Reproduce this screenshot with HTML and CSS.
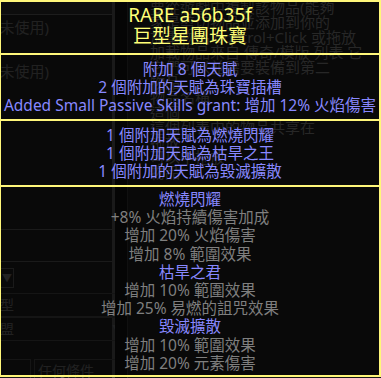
FILE: index.html
```html
<!DOCTYPE html>
<html lang="zh-Hant">
<head>
<meta charset="utf-8">
<title>巨型星團珠寶</title>
<link rel="stylesheet" href="styles.css">
</head>
<body>
<div class="page">
  <aside class="left">
    <div class="topbar"></div>
    <div class="slot">(未使用)</div>
    <div class="slot gap">(未使用)</div>
    <div class="filler"></div>
    <div class="rule"></div>
    <div class="row-sel"><span class="sel small">▼</span></div>
    <div class="rule"></div>
    <div class="row-sel"><span class="sel tiny">▼</span></div>
    <div class="field">型</div>
    <div class="field drop">盟<span class="arrow">▼</span></div>
    <div class="inputs"><span class="box short"></span><span class="box long">任何條件</span></div>
  </aside>
  <main class="right">
    <div class="divider"></div>
    <div class="help">
      <p>要從遊戲中複製該物品(能夠</p>
      <p>家是剪切物品並添加到你的</p>
      <p>加重物品 Control+Click 或拖放</p>
      <p>加載物品來自 傳奇/模版 列表 它</p>
      <p>它們可以並需要裝備到第二</p>
      <p>物品</p>
      <p>物品名稱</p>
      <p>這個</p>
      <p>這個列表中的物品共享在</p>
      <p>拖放</p>
      <p>可以中拖放</p>
      <p>物品</p>
    </div>
  </main>
</div>

<div class="tooltip">
  <section class="sec head">
    <div class="name">RARE a56b35f</div>
    <div class="name">巨型星團珠寶</div>
  </section>
  <section class="sec mods">
    <div class="magic">附加 8 個天賦</div>
    <div class="magic">2 個附加的天賦為珠寶插槽</div>
    <div class="magic">Added Small Passive Skills grant: 增加 12% 火焰傷害</div>
  </section>
  <section class="sec mods">
    <div class="magic">1 個附加天賦為燃燒閃耀</div>
    <div class="magic">1 個附加天賦為枯旱之王</div>
    <div class="magic">1 個附加的天賦為毀滅擴散</div>
  </section>
  <section class="sec notables">
    <div class="magic">燃燒閃耀</div>
    <div class="plain">+8% 火焰持續傷害加成</div>
    <div class="plain">增加 20% 火焰傷害</div>
    <div class="plain">增加 8% 範圍效果</div>
    <div class="magic">枯旱之君</div>
    <div class="plain">增加 10% 範圍效果</div>
    <div class="plain">增加 25% 易燃的詛咒效果</div>
    <div class="magic">毀滅擴散</div>
    <div class="plain">增加 10% 範圍效果</div>
    <div class="plain">增加 20% 元素傷害</div>
  </section>
</div>
</body>
</html>
```
FILE: styles.css
```css
html, body {
  margin: 0;
  padding: 0;
}
body {
  width: 381px;
  height: 378px;
  overflow: hidden;
  background: #161616;
  font-family: "Noto Sans", "Noto Sans CJK TC", sans-serif;
}

/* background application */
.page {
  display: grid;
  grid-template-columns: 115px 1fr;
  height: 378px;
}
.left {
  display: flex;
  flex-direction: column;
  background: #1a1a1a;
  color: #585858;
  font-size: 15px;
  border-right: 3px solid #444;
}
.topbar {
  height: 14px;
  border-bottom: 1px solid #4c4c4c;
  background: #222;
}
.slot {
  height: 24px;
  line-height: 24px;
  margin-left: -5px;
}
.slot.gap {
  margin-top: 20px;
}
.filler {
  height: 146px;
}
.rule {
  border-top: 1px solid #444;
}
.row-sel {
  height: 31px;
  display: flex;
  align-items: center;
  justify-content: flex-end;
}
.sel {
  border: 1px solid #444;
  font-size: 10px;
  color: #5a5a5a;
  display: flex;
  align-items: center;
  justify-content: center;
}
.sel.small {
  width: 16px;
  height: 18px;
  margin-right: -18px;
}
.sel.tiny {
  width: 12px;
  height: 18px;
  margin-right: auto;
}
.field {
  height: 22px;
  line-height: 22px;
  border: 1px solid #383838;
  border-left: 0;
  margin-right: -15px;
  font-size: 14px;
}
.field.drop {
  display: flex;
  justify-content: space-between;
}
.arrow {
  font-size: 10px;
  padding-right: 4px;
}
.inputs {
  display: flex;
  gap: 3px;
  margin-top: 18px;
  margin-right: -15px;
}
.box {
  height: 22px;
  line-height: 22px;
  border: 1px solid #383838;
  font-size: 14px;
}
.box.short {
  width: 30px;
  border-left: 0;
}
.box.long {
  flex: 1;
  padding-left: 3px;
}

.right {
  display: flex;
  background: #181818;
}
.divider {
  width: 12px;
  background: #0e0e0e;
  border-right: 1px solid #2c2c2c;
}
.help {
  padding-left: 22px;
  color: #666;
  font-size: 15px;
  line-height: 15px;
  white-space: nowrap;
}
.help p {
  margin: 0;
}

/* tooltip overlay */
.tooltip {
  position: absolute;
  left: -1px;
  top: 0;
  width: 382px;
  height: 377px;
  box-sizing: border-box;
  border: 2px solid #fff77a;
  background: rgba(0, 0, 0, 0.62);
  display: flex;
  flex-direction: column;
  text-align: center;
  white-space: nowrap;
}
.sec + .sec {
  border-top: 2px solid #fff77a;
}
.head {
  height: 51px;
  box-sizing: border-box;
  padding-top: 3px;
}
.name {
  color: #ffff77;
  font-size: 19px;
  line-height: 21px;
}
.mods {
  height: 66px;
  box-sizing: border-box;
  padding-top: 5px;
}
.notables {
  flex: 1;
  padding-top: 3px;
}
.magic, .plain {
  font-size: 15.5px;
  line-height: 18px;
}
.notables .magic, .notables .plain {
  line-height: 18.2px;
}
.magic {
  color: #8888ff;
}
.plain {
  color: #7f7f7f;
}
```
